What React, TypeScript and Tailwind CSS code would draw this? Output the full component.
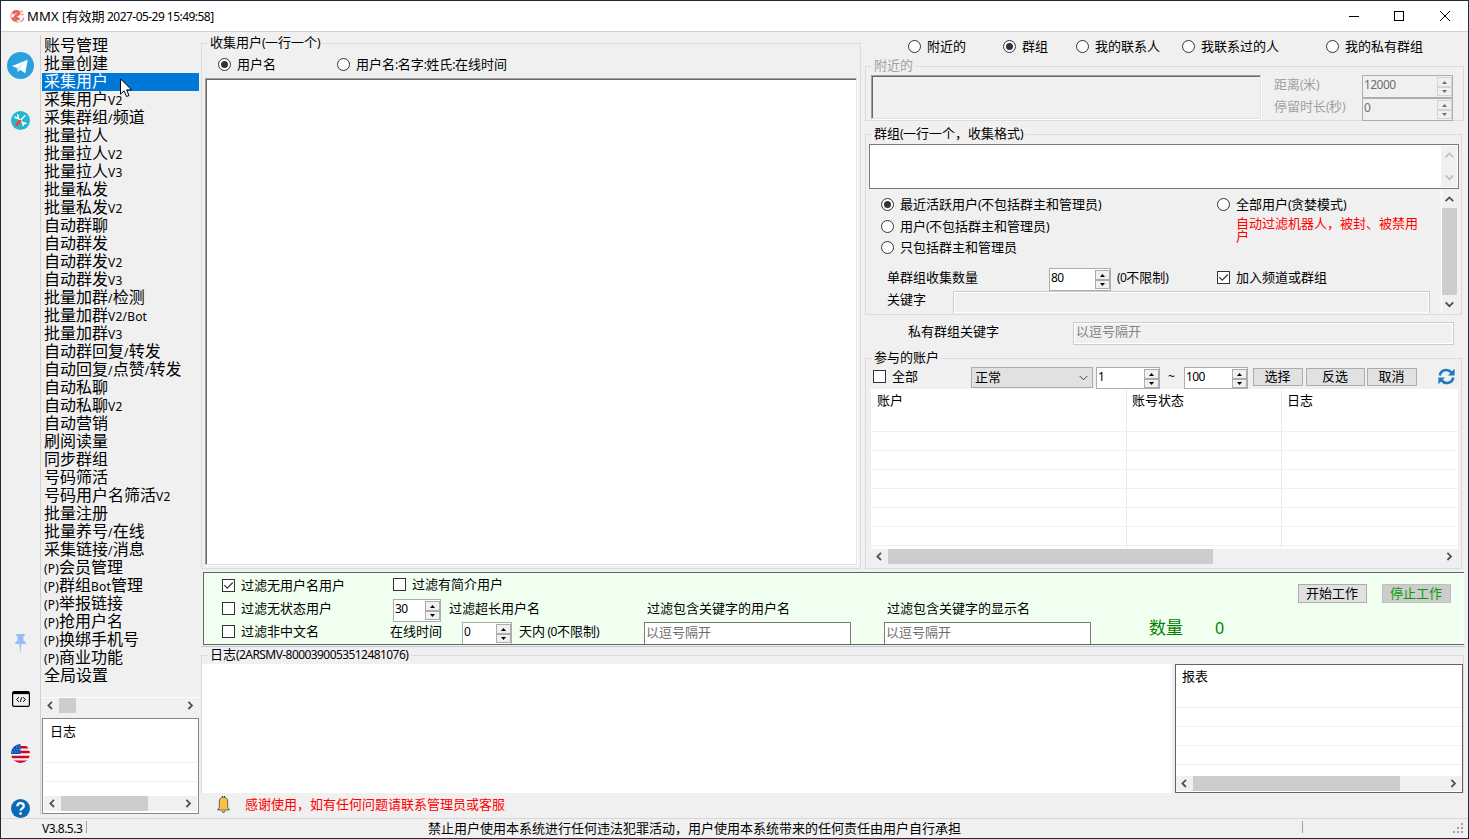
import React from "react";
import clsx from "clsx";

const menuItems = [
  "账号管理",
  "批量创建",
  "采集用户",
  "采集用户V2",
  "采集群组/频道",
  "批量拉人",
  "批量拉人V2",
  "批量拉人V3",
  "批量私发",
  "批量私发V2",
  "自动群聊",
  "自动群发",
  "自动群发V2",
  "自动群发V3",
  "批量加群/检测",
  "批量加群V2/Bot",
  "批量加群V3",
  "自动群回复/转发",
  "自动回复/点赞/转发",
  "自动私聊",
  "自动私聊V2",
  "自动营销",
  "刷阅读量",
  "同步群组",
  "号码筛活",
  "号码用户名筛活V2",
  "批量注册",
  "批量养号/在线",
  "采集链接/消息",
  "(P)会员管理",
  "(P)群组Bot管理",
  "(P)举报链接",
  "(P)抢用户名",
  "(P)换绑手机号",
  "(P)商业功能",
  "全局设置",
];

// Latin runs are set smaller and tighter than the Chinese glyphs
function Txt({
  text,
  className,
  latin = "text-[12px] tracking-[-0.57px]",
}: {
  text: string;
  className?: string;
  latin?: string;
}) {
  const parts = text.split(/([\x20-\x7e]+)/).filter(Boolean);
  return (
    <span className={clsx("whitespace-pre shrink-0", className)}>
      {parts.map((part, i) =>
        /^[\x20-\x7e]/.test(part) ? (
          <span key={i} className={latin}>
            {part}
          </span>
        ) : (
          part
        )
      )}
    </span>
  );
}

function Radio({ label, checked, className }: { label: string; checked?: boolean; className?: string }) {
  return (
    <label className={clsx("flex items-center gap-[6px] shrink-0", className)}>
      <span className="w-[13px] h-[13px] rounded-full border border-[#333] bg-white flex items-center justify-center shrink-0">
        {checked && <span className="w-[7px] h-[7px] rounded-full bg-[#333]" />}
      </span>
      <Txt text={label} />
    </label>
  );
}

function Check({ label, checked, className }: { label: string; checked?: boolean; className?: string }) {
  return (
    <label className={clsx("flex items-center gap-[6px] shrink-0", className)}>
      <span className="w-[13px] h-[13px] border border-[#333] bg-white shrink-0">
        {checked && (
          <svg viewBox="0 0 11 11" className="w-[11px] h-[11px]" fill="none" stroke="#333" strokeWidth="1.2">
            <path d="M1.3 5.2 4.2 8.1 9.8 2.5" />
          </svg>
        )}
      </span>
      <Txt text={label} />
    </label>
  );
}

function Spin({ value, className, disabled }: { value: string; className?: string; disabled?: boolean }) {
  const arrow = disabled ? "#6d6d6d" : "#000";
  const btn = clsx(
    "w-[15px] border bg-[#f0f0f0] flex items-center justify-center shrink-0",
    disabled ? "border-[#d4d4d4]" : "border-[#acacac]"
  );
  return (
    <div
      className={clsx(
        "h-[23px] border border-[#abadb3] flex justify-between shrink-0 pl-px pt-px",
        disabled ? "bg-[#f0f0f0] text-[#6d6d6d]" : "bg-white",
        className
      )}
    >
      <Txt text={value} className="leading-[15px]" />
      <div className="flex flex-col">
        <div className={clsx(btn, "h-[10px]")}>
          <svg width="5" height="3" viewBox="0 0 5 3" fill={arrow}>
            <path d="M0 3h5L2.5 0z" />
          </svg>
        </div>
        <div className={clsx(btn, "h-[9px]")}>
          <svg width="5" height="3" viewBox="0 0 5 3" fill={arrow}>
            <path d="M0 0h5L2.5 3z" />
          </svg>
        </div>
      </div>
    </div>
  );
}

function Chevron({ dir, color = "#505050" }: { dir: "left" | "right" | "up" | "down"; color?: string }) {
  const paths = {
    left: "M6 0.8 2.4 4.4 6 8",
    right: "M2.4 0.8 6 4.4 2.4 8",
    up: "M0.6 6.2 4.4 2.4 8.2 6.2",
    down: "M0.6 2.4 4.4 6.2 8.2 2.4",
  };
  return (
    <svg width="9" height="9" viewBox="0 0 9 9" fill="none" stroke={color} strokeWidth="1.8" className="shrink-0">
      <path d={paths[dir]} />
    </svg>
  );
}

function HScroll({ thumb, className }: { thumb: string; className?: string }) {
  return (
    <div className={clsx("h-[15px] bg-[#f0f0f0] flex items-center shrink-0", className)}>
      <div className="w-[17px] flex justify-center">
        <Chevron dir="left" />
      </div>
      <div className={clsx("h-full bg-[#cdcdcd]", thumb)} />
      <div className="w-[17px] ml-auto flex justify-center">
        <Chevron dir="right" />
      </div>
    </div>
  );
}

function Group({
  title,
  className,
  disabled,
  children,
}: {
  title: string;
  className?: string;
  disabled?: boolean;
  children?: React.ReactNode;
}) {
  return (
    <div className={clsx("relative border border-[#dcdcdc] flex flex-col", className)}>
      <Txt
        text={title}
        className={clsx(
          "absolute left-[6px] -top-[8px] h-[14px] leading-[12px] px-[2px] bg-[#f0f0f0]",
          disabled && "text-[#a0a0a0]"
        )}
      />
      {children}
    </div>
  );
}

function Btn({ label, className }: { label: string; className?: string }) {
  return (
    <button className={clsx("border flex items-center justify-center shrink-0 pr-px pb-px", className)}>{label}</button>
  );
}

function SideIcons() {
  return (
    <div className="w-[39px] shrink-0 flex flex-col items-center [&>*]:shrink-0">
      <svg className="mt-[20px] w-[27px] h-[27px]" viewBox="0 0 27 27">
        <circle cx="13.5" cy="13.5" r="13.5" fill="#2aa1de" />
        <path d="M5 14 20.7 7.7 18.2 21.3 13.3 17.8 10.9 20.1 10.4 16.2z" fill="#fff" />
        <path d="M10.4 16.2 17.8 10.3 12 16.8 10.9 20.1z" fill="#b5dcf2" />
      </svg>
      <svg className="mt-[32px] w-[19px] h-[19px]" viewBox="0 0 19 19">
        <circle cx="9.5" cy="9.5" r="9.5" fill="#26b5cf" />
        <path d="m6 6 7.5 7.5" stroke="#fff" strokeWidth="1.7" />
        <path d="M4 5.2c0 2 2.6 2.4 3.2.8.3-1-.2-2-1.2-2.2M12.4 15a1.9 1.9 0 0 1 .4-2.8 2 2 0 0 1 2.6.8" fill="none" stroke="#fff" strokeWidth="1.4" />
        <path d="m9 10 5.3-5.8" stroke="#fff" strokeWidth="1.3" />
        <path d="m5.6 13.5 3.4-3.4" stroke="#ee4437" strokeWidth="3" strokeLinecap="round" />
      </svg>
      <svg className="mt-[503px] w-[13px] h-[19px]" viewBox="0 0 13 19" fill="#94bdf9">
        <path d="M2.2 1h8.6v1.8L9.4 3.6v4c1.7.8 2.6 2 2.6 3.4H7.3L6.6 19h-.5L5.5 11H1c0-1.4.9-2.6 2.6-3.4v-4L2.2 2.8z" />
      </svg>
      <svg className="mt-[39px] w-[18px] h-[16px]" viewBox="0 0 18 16" fill="none" stroke="#000">
        <rect x=".6" y=".6" width="16.8" height="14.8" rx="1.6" strokeWidth="1.2" />
        <path d="M1 2h16" strokeWidth="2.2" />
        <path d="M7 6.2 4.5 8.5 7 10.8M11 6.2l2.5 2.3-2.5 2.3M9.7 6.2 8.3 11" strokeWidth="1" />
      </svg>
      <svg className="mt-[37px] w-[19px] h-[19px]" viewBox="0 0 19 19">
        <clipPath id="flag">
          <circle cx="9.5" cy="9.5" r="9.5" />
        </clipPath>
        <g clipPath="url(#flag)">
          <rect width="19" height="19" fill="#f5f5f5" />
          <path d="M9 3.2h10M9 8h10M0 13h19M0 17.8h19" stroke="#d80027" strokeWidth="2.4" />
          <path d="M0 0h9.5v10H0z" fill="#0052b4" />
          <path d="M1 8h8M3 5.5h6M5 3h4" stroke="#c8dcf5" strokeWidth=".8" strokeDasharray="1 1.6" />
        </g>
      </svg>
      <svg className="mt-[36px] w-[19px] h-[19px]" viewBox="0 0 19 19">
        <circle cx="9.5" cy="9.5" r="9.5" fill="#0a6ab6" />
        <path d="M6.4 7.2C6.4 3 12.8 3.2 12.8 7c0 2.3-3.2 2.4-3.2 4.8" fill="none" stroke="#fff" strokeWidth="2.2" />
        <circle cx="9.6" cy="14.6" r="1.4" fill="#fff" />
      </svg>
    </div>
  );
}

function Sidebar() {
  return (
    <div className="w-[160px] shrink-0 mt-[3px] mb-[3px] border-l border-[#d0d0d0] pl-px pt-[2px] flex flex-col">
      <div className="h-[660px] w-[157px] text-[16px] shrink-0">
        {menuItems.map((item, i) => (
          <div
            key={item}
            className={clsx("h-[18px] leading-[16px] pl-[2px] flex", i === 2 && "bg-[#0078d7] text-white")}
          >
            <Txt text={item} latin="text-[12px] tracking-[0.2px]" />
          </div>
        ))}
      </div>
      <HScroll thumb="w-[17px]" className="w-[157px] border-t border-t-white h-[16px]" />
      <div className="mt-[5px] w-[157px] h-[96px] border border-[#828790] bg-white px-px flex flex-col">
        <Txt text="日志" className="pl-[6px] h-[24px] leading-[24px]" />
        <div className="h-[20px] border-b border-[#f0f0f0]" />
        <div className="h-[19px] border-b border-[#f0f0f0]" />
        <HScroll thumb="w-[87px]" className="mt-[14px]" />
      </div>
    </div>
  );
}

function CollectPanel() {
  return (
    <Group title="收集用户(一行一个)" className="w-[660px] mt-[11px] h-[526px] shrink-0">
      <div className="flex items-center pl-[16px] mt-[13px] h-[14px]">
        <Radio label="用户名" checked className="w-[119px]" />
        <Radio label="用户名:名字:姓氏:在线时间" />
      </div>
      <div className="mt-[7px] ml-[3px] w-[652px] h-[487px] border border-t-[#a0a0a0] border-l-[#a0a0a0] border-r-[#e3e3e3] border-b-[#e3e3e3] shadow-[inset_1px_1px_0_#696969,1px_1px_0_#fff] bg-white" />
    </Group>
  );
}

function NearbyGroup() {
  return (
    <Group title="附近的" disabled className="mt-[12px] h-[55px] w-[599px]">
      <div className="flex pl-[5px] pt-[8px]">
        <div className="w-[390px] mr-px h-[44px] border border-t-[#a0a0a0] border-l-[#a0a0a0] border-r-[#e3e3e3] border-b-[#e3e3e3] shadow-[inset_1px_1px_0_#696969,1px_1px_0_#fff]" />
        <div className="w-[100px] pl-[12px] text-[#a0a0a0] flex flex-col">
          <Txt text="距离(米)" className="leading-[18px] h-[22px]" />
          <Txt text="停留时长(秒)" className="leading-[18px] h-[22px]" />
        </div>
        <div className="flex flex-col">
          <Spin value="12000" disabled className="w-[91px]" />
          <Spin value="0" disabled className="w-[91px]" />
        </div>
      </div>
    </Group>
  );
}

function TargetGroup() {
  return (
    <Group title="群组(一行一个，收集格式)" className="mt-[13px] h-[181px] w-[597px]">
      <div className="mt-[9px] ml-[3px] w-[590px] h-[45px] shrink-0 border border-[#7a7a7a] bg-white flex justify-end p-px">
        <div className="w-[16px] bg-[#f0f0f0] flex flex-col items-center justify-between py-[5px]">
          <Chevron dir="up" color="#bfbfbf" />
          <Chevron dir="down" color="#bfbfbf" />
        </div>
      </div>
      <div className="flex mt-px h-[123px]">
        <div className="w-[575px] pl-[15px] flex flex-col">
          <div className="flex mt-[3px]">
            <div className="w-[336px] flex flex-col">
              <Radio label="最近活跃用户(不包括群主和管理员)" checked className="h-[22px]" />
              <Radio label="用户(不包括群主和管理员)" className="h-[22px]" />
              <Radio label="只包括群主和管理员" className="h-[20px]" />
            </div>
            <div className="flex flex-col">
              <Radio label="全部用户(贪婪模式)" className="h-[22px]" />
              <p className="ml-[19px] w-[190px] text-[#ff0000] leading-[13px] mt-[2px]">自动过滤机器人，被封、被禁用户</p>
            </div>
          </div>
          <div className="flex mt-[11px] pl-[6px] h-[23px]">
            <Txt text="单群组收集数量" className="w-[162px] leading-[19px]" />
            <Spin value="80" className="w-[62px]" />
            <Txt text="(0不限制)" className="ml-[6px] w-[100px] leading-[19px]" />
            <Check label="加入频道或群组" checked className="h-[19px]" />
          </div>
          <div className="flex pl-[6px]">
            <Txt text="关键字" className="w-[66px] leading-[17px]" />
            <div className="w-[477px] h-[22px] border border-b-0 border-[#cccccc] shadow-[inset_0_0_0_1px_#fff]" />
          </div>
        </div>
        <div className="w-[16px] border-l border-white flex flex-col items-center pt-[5px]">
          <Chevron dir="up" />
          <div className="w-[15px] h-[87px] bg-[#cdcdcd] mt-[4px] shrink-0" />
          <div className="mt-[5px]">
            <Chevron dir="down" />
          </div>
        </div>
      </div>
    </Group>
  );
}

function RefreshIcon() {
  return (
    <svg className="w-[17px] h-[17px] shrink-0" viewBox="0 0 17 17" fill="none" stroke="#1e78c2" strokeWidth="2.6">
      <path d="M1.8 7.5C2.6 1.6 10 .3 13.4 4.6" />
      <path d="M15.2 9.5C14.4 15.4 7 16.7 3.6 12.4" />
      <path d="M16.6.8v6.6H10z" fill="#1e78c2" stroke="none" />
      <path d="M.4 16.2V9.6H7z" fill="#1e78c2" stroke="none" />
    </svg>
  );
}

function AccountsGroup() {
  const grayBtn = "h-[18px] bg-[#e1e1e1] border-[#adadad]";
  return (
    <Group title="参与的账户" className="mt-[13px] h-[211px] w-[597px]">
      <div className="flex items-start pl-[7px] mt-[7px] h-[23px]">
        <Check label="全部" className="w-[98px] h-[21px]" />
        <div className="w-[122px] h-[21px] mt-px border border-[#adadad] bg-[#e1e1e1] flex items-center justify-between pl-[3px] pr-[4px]">
          <span>正常</span>
          <svg width="9" height="6" viewBox="0 0 9 6" fill="none" stroke="#444" className="shrink-0">
            <path d="m.5.8 4 4 4-4" />
          </svg>
        </div>
        <Spin value="1" className="w-[64px] ml-[3px] mr-[8px] mt-px max-h-[22px]" />
        <Txt text="~" className="w-[16px] leading-[21px]" />
        <Spin value="100" className="w-[64px] mt-px max-h-[22px]" />
        <Btn label="选择" className={clsx(grayBtn, "w-[50px] ml-[5px] mt-[2px]")} />
        <Btn label="反选" className={clsx(grayBtn, "w-[59px] ml-[3px] mt-[2px]")} />
        <Btn label="取消" className={clsx(grayBtn, "w-[50px] ml-[2px] mt-[2px]")} />
        <div className="ml-[21px] mt-[2px]">
          <RefreshIcon />
        </div>
      </div>
      <div className="ml-[5px] w-[587px] h-[160px] bg-white grid grid-cols-[256px_155px_1fr]">
        {["账户", "账号状态", "日志"].map((col, i) => (
          <div key={col} className={clsx("flex flex-col", i < 2 && "border-r border-[#ececec]")}>
            <Txt text={col} className={clsx("h-[23px] leading-[22px]", i === 0 ? "pl-[6px]" : "pl-[5px]")} />
            {[0, 1, 2, 3, 4, 5, 6].map((row) => (
              <div key={row} className={clsx("border-b border-[#f0f0f0]", row === 0 ? "h-[20px]" : "h-[19px]")} />
            ))}
          </div>
        ))}
      </div>
      <HScroll thumb="w-[325px]" className="ml-[5px] w-[587px]" />
    </Group>
  );
}

function FilterPanel() {
  const input = "w-[207px] h-[22px] border border-b-0 border-[#7a7a7a] bg-white text-[#6d6d6d] pl-px leading-[18px] shrink-0";
  return (
    <div className="ml-[2px] mr-px mt-[3px] h-[73px] border border-r-0 border-[#646464] bg-[#f0fff0] flex shrink-0">
      <div className="w-[945px] pl-[18px] flex flex-col">
        <div className="flex items-center h-[24px] shrink-0">
          <Check label="过滤无用户名用户" checked className="w-[171px]" />
          <Check label="过滤有简介用户" className="-mt-px" />
        </div>
        <div className="flex h-[24px] shrink-0">
          <Check label="过滤无状态用户" className="w-[171px] h-[23px]" />
          <Spin value="30" className="w-[48px] mt-[2px]" />
          <Txt text="过滤超长用户名" className="w-[198px] ml-[8px] leading-[22px]" />
          <Txt text="过滤包含关键字的用户名" className="w-[240px] leading-[22px]" />
          <Txt text="过滤包含关键字的显示名" className="leading-[22px]" />
        </div>
        <div className="flex items-start h-[23px] shrink-0 overflow-hidden">
          <Check label="过滤非中文名" className="w-[168px] h-[21px]" />
          <Txt text="在线时间" className="w-[72px] leading-[20px]" />
          <Spin value="0" className="w-[50px] mt-px" />
          <Txt text="天内 (0不限制)" className="w-[125px] ml-[7px] leading-[20px]" />
          <div className={clsx(input, "mt-px")}>以逗号隔开</div>
          <div className={clsx(input, "ml-[33px] mt-px")}>以逗号隔开</div>
        </div>
      </div>
      <div className="flex-1 flex flex-col">
        <div className="flex gap-[15px] pl-[149px] pt-[11px] h-[44px]">
          <Btn label="开始工作" className="w-[69px] h-[19px] bg-[#e1e1e1] border-[#adadad]" />
          <Btn label="停止工作" className="w-[69px] h-[19px] bg-[#cccccc] border-[#bfbfbf] text-[#00a000]" />
        </div>
        <div className="flex text-[17px] leading-[22px] text-[#008000]">
          <span className="w-[66px]">数量</span>
          <Txt text="0" latin="text-[16px]" />
        </div>
      </div>
    </div>
  );
}

function LogGroup() {
  return (
    <Group title="日志(2ARSMV-8000390053512481076)" className="mt-[8px] w-[1263px] h-[138px] border-b-0 shrink-0">
      <div className="flex gap-[3px] mt-[8px]">
        <div className="w-[970px] h-[129px] bg-white" />
        <div className="w-[288px] h-[129px] border border-[#646464] bg-white flex flex-col shrink-0">
          <Txt text="报表" className="pl-[6px] h-[24px] leading-[22px]" />
          {[0, 1, 2, 3].map((row) => (
            <div key={row} className="h-[19px] border-b border-[#f0f0f0]" />
          ))}
          <HScroll thumb="w-[207px]" className="mt-auto mb-px" />
        </div>
      </div>
    </Group>
  );
}

function StatusBar() {
  return (
    <div className="h-[20px] shrink-0 border-t border-[#d7d7d7] flex items-start">
      <Txt text="V3.8.5.3" className="pl-[41px] w-[85px] leading-[18px]" latin="text-[12px] tracking-[-0.5px]" />
      <div className="w-px h-[12px] mt-[2px] bg-[#a0a0a0]" />
      <span className="ml-[341px] w-[874px] leading-[18px]">
        禁止用户使用本系统进行任何违法犯罪活动，用户使用本系统带来的任何责任由用户自行承担
      </span>
      <div className="w-px h-[12px] mt-[2px] bg-[#a0a0a0]" />
      <svg className="ml-[150px] mt-[4px] w-[11px] h-[11px]" viewBox="0 0 11 11" fill="#a0a0a0">
        <path d="M8 0h2v2H8zM8 4h2v2H8zM8 8h2v2H8zM4 4h2v2H4zM4 8h2v2H4zM0 8h2v2H0z" />
      </svg>
    </div>
  );
}

function TitleBar() {
  return (
    <div className="h-[31px] shrink-0 bg-white border-b border-[#d0d0d0] flex items-center">
      <svg className="ml-[9px] w-[15px] h-[13px]" viewBox="0 0 15 13" fill="none">
        <path d="M5.6.8C2 1.4.2 4.6 1.2 7.9c1 3.2 4.4 4.5 7.6 4" stroke="#f2a29c" strokeWidth="1.3" />
        <path d="M3 3.6c1.6-2.4 5-2.8 6-.8.8 1.8-3.2 1.6-3.6 4-.2 1.8 2 2.6 4 1.6" stroke="#ef6058" strokeWidth="3" />
        <path d="M10.2 1c1.4-.4 2 .2 2.4 1.4M10.8 4.8l3-.6M9.8 11.6c2 0 3.6-1.6 4-4.2" stroke="#e6a19c" strokeWidth="1.5" />
        <path d="M2.4 7.4c.6 2 2.4 3 4.4 3" stroke="#d96e69" strokeWidth="2.4" />
      </svg>
      <Txt text="MMX" className="ml-[2px] w-[35px]" latin="text-[13px] tracking-[0.2px]" />
      <Txt text="[有效期 2027-05-29 15:49:58]" latin="text-[12px] tracking-[-0.54px]" />
      <div className="ml-auto flex items-center gap-[35px] mr-[17px]">
        <svg width="11" height="11" stroke="#000" className="shrink-0">
          <path d="M1 5.5h10" />
        </svg>
        <svg width="11" height="11" stroke="#000" fill="none" className="shrink-0">
          <rect x=".5" y=".5" width="9" height="9" />
        </svg>
        <svg width="11" height="11" stroke="#000" className="shrink-0">
          <path d="m0 0 10 10M10 0 0 10" />
        </svg>
      </div>
    </div>
  );
}

export default function App() {
  return (
    <div className="relative w-[1469px] h-[839px] overflow-hidden border border-[#1b2a3c] bg-[#f0f0f0] flex flex-col text-[13px] leading-none text-black font-['Noto_Sans','Noto_Sans_CJK_SC',sans-serif]">
      <TitleBar />
      <div className="flex flex-1 min-h-0">
        <SideIcons />
        <Sidebar />
        <div className="w-[1264px] ml-px flex flex-col">
          <div className="flex gap-[4px] h-[537px] shrink-0">
            <CollectPanel />
            <div className="w-[599px] flex flex-col [&>*]:shrink-0">
              <div className="flex items-center mt-[7px] h-[15px] pl-[43px]">
                <Radio label="附近的" className="w-[95px]" />
                <Radio label="群组" checked className="w-[73px]" />
                <Radio label="我的联系人" className="w-[106px]" />
                <Radio label="我联系过的人" className="w-[144px]" />
                <Radio label="我的私有群组" />
              </div>
              <NearbyGroup />
              <TargetGroup />
              <div className="flex mt-[7px] h-[23px] pl-[43px]">
                <span className="w-[165px] leading-[19px]">私有群组关键字</span>
                <div className="w-[381px] border border-[#cccccc] shadow-[inset_0_0_0_1px_#fff] text-[#838383] pl-[2px] leading-[17px]">
                  以逗号隔开
                </div>
              </div>
              <AccountsGroup />
            </div>
          </div>
          <FilterPanel />
          <div className="h-px mt-px bg-[#bccbdc] shrink-0" />
          <LogGroup />
          <div className="flex items-center h-[20px] mt-px pl-[16px]">
            <svg className="w-[13px] h-[17px] shrink-0" viewBox="0 0 13 17">
              <path d="M6.5 1.2c3 0 4.2 2 4.2 4.6v5.4l1.6 2.8H.7l1.6-2.8V5.8c0-2.6 1.2-4.6 4.2-4.6z" fill="#fbbf3a" stroke="#4d5a6b" strokeWidth=".9" />
              <path d="M5.5 0v1.4M7.5 0v1.4M5 15.2c.6 1.6 2.4 1.6 3 0" stroke="#1c3a66" fill="#fbbf3a" />
            </svg>
            <span className="ml-[15px] text-[#ff0000]">感谢使用，如有任何问题请联系管理员或客服</span>
          </div>
        </div>
      </div>
      <StatusBar />
      <svg className="absolute left-[119px] top-[77px]" width="13" height="20" viewBox="0 0 13 20">
        <path d="M.5.8v15.4l3.6-3.4 2.5 5.7 2.4-1-2.4-5.6h5z" fill="#fff" stroke="#000" />
      </svg>
    </div>
  );
}
